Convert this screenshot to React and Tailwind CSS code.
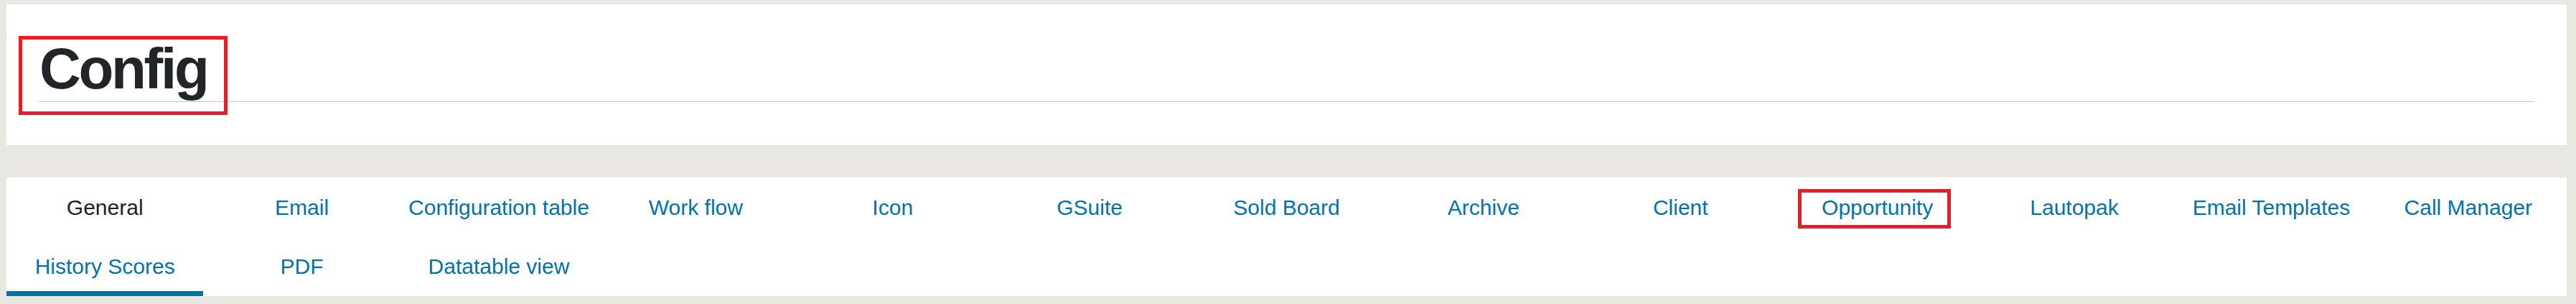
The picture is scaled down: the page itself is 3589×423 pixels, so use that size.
import React, { useState } from 'react';

const tabs = [
  'General',
  'Email',
  'Configuration table',
  'Work flow',
  'Icon',
  'GSuite',
  'Sold Board',
  'Archive',
  'Client',
  'Opportunity',
  'Lautopak',
  'Email Templates',
  'Call Manager',
  'History Scores',
  'PDF',
  'Datatable view',
];

const App = () => {
  const [active, setActive] = useState('History Scores');

  return (
    <div className="min-h-[423px] bg-[#e8e7e2] pt-[6px] pl-[9px] pr-[13px] pb-[11px] font-['Liberation_Sans',Arial,sans-serif]">
      {/* page header */}
      <div className="relative bg-white h-[196px] px-[45px] pt-[50px]">
        <div className="border-b border-[#c6c6c6] pb-[5px]">
          <h1 className="ml-[1px] text-[80px] leading-none font-bold tracking-[-3.3px] text-[#212529]">
            Config
          </h1>
        </div>
        <div className="absolute left-[17px] top-[44px] w-[291px] h-[110px] border-[5px] border-[#ed1c24]" />
      </div>

      {/* tabs */}
      <div className="mt-[45px] bg-white grid grid-cols-[repeat(13,minmax(0,1fr))]">
        {tabs.map((tab) => {
          const isActive = tab === active;
          return (
            <button
              key={tab}
              type="button"
              onClick={() => setActive(tab)}
              className={
                'relative h-[82.5px] pt-[8px] border-b-[7px] text-[30px] leading-none whitespace-nowrap text-center ' +
                (isActive ? 'border-[#0073aa] ' : 'border-transparent ') +
                (tab === 'General' ? 'text-[#222222]' : 'text-[#0073aa]')
              }
            >
              {tab}
              {tab === 'Opportunity' && (
                <span className="absolute left-[27px] top-[16px] w-[213px] h-[55px] border-[5px] border-[#ed1c24]" />
              )}
            </button>
          );
        })}
      </div>
    </div>
  );
};

export default App;
